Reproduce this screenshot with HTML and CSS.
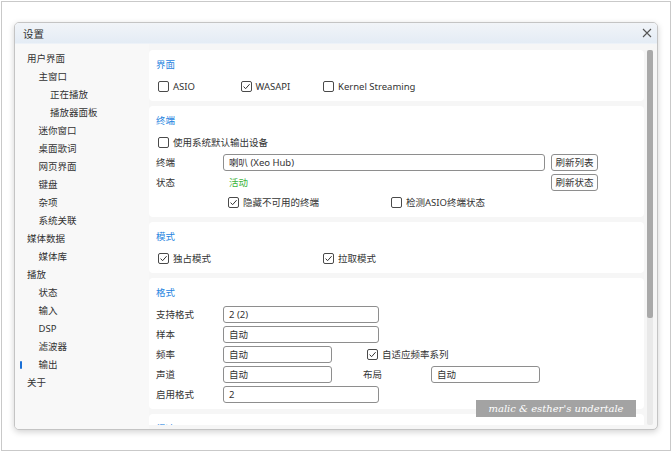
FILE: index.html
```html
<!DOCTYPE html>
<html lang="zh-CN">
<head>
<meta charset="utf-8">
<title>设置</title>
<link rel="stylesheet" href="styles.css">
</head>
<body>
<div class="frame">
  <div class="dialog">
    <div class="titlebar">
      <span class="title">设置</span>
      <svg class="close" width="10" height="10" viewBox="0 0 10 10"><path d="M1 1L9 9M9 1L1 9" stroke="#555" stroke-width="1.1" fill="none"/></svg>
    </div>
    <div class="body">
      <nav class="sidebar">
        <div class="item l0">用户界面</div>
        <div class="item l1">主窗口</div>
        <div class="item l2">正在播放</div>
        <div class="item l2">播放器面板</div>
        <div class="item l1">迷你窗口</div>
        <div class="item l1">桌面歌词</div>
        <div class="item l1">网页界面</div>
        <div class="item l1">键盘</div>
        <div class="item l1">杂项</div>
        <div class="item l1">系统关联</div>
        <div class="item l0">媒体数据</div>
        <div class="item l1">媒体库</div>
        <div class="item l0">播放</div>
        <div class="item l1">状态</div>
        <div class="item l1">输入</div>
        <div class="item l1">DSP</div>
        <div class="item l1">滤波器</div>
        <div class="item l1 selected">输出</div>
        <div class="item l0">关于</div>
      </nav>
      <div class="main">
        <div class="scroll">
          <section class="card">
            <h3 class="card-title">界面</h3>
            <div class="row opts opts3">
              <label class="check"><span class="box"></span>ASIO</label>
              <label class="check"><span class="box"><svg viewBox="0 0 11 11"><path d="M2.6 5.6L4.6 7.7L8.6 3.2"/></svg></span>WASAPI</label>
              <label class="check"><span class="box"></span>Kernel Streaming</label>
            </div>
          </section>

          <section class="card">
            <h3 class="card-title">终端</h3>
            <div class="row opts">
              <label class="check"><span class="box"></span>使用系统默认输出设备</label>
            </div>
            <div class="row">
              <span class="label">终端</span>
              <div class="field wide">喇叭 (Xeo Hub)</div>
              <div class="btn">刷新列表</div>
            </div>
            <div class="row">
              <span class="label">状态</span>
              <span class="status">活动</span>
              <div class="btn">刷新状态</div>
            </div>
            <div class="row opts opts-indent">
              <label class="check"><span class="box"><svg viewBox="0 0 11 11"><path d="M2.6 5.6L4.6 7.7L8.6 3.2"/></svg></span>隐藏不可用的终端</label>
              <label class="check"><span class="box"></span>检测ASIO终端状态</label>
            </div>
          </section>

          <section class="card">
            <h3 class="card-title">模式</h3>
            <div class="row opts opts2">
              <label class="check"><span class="box"><svg viewBox="0 0 11 11"><path d="M2.6 5.6L4.6 7.7L8.6 3.2"/></svg></span>独占模式</label>
              <label class="check"><span class="box"><svg viewBox="0 0 11 11"><path d="M2.6 5.6L4.6 7.7L8.6 3.2"/></svg></span>拉取模式</label>
            </div>
          </section>

          <section class="card">
            <h3 class="card-title">格式</h3>
            <div class="row">
              <span class="label">支持格式</span>
              <div class="field mid">2 (2)</div>
            </div>
            <div class="row">
              <span class="label">样本</span>
              <div class="field mid">自动</div>
            </div>
            <div class="row">
              <span class="label">频率</span>
              <div class="field half">自动</div>
              <label class="check after-half"><span class="box"><svg viewBox="0 0 11 11"><path d="M2.6 5.6L4.6 7.7L8.6 3.2"/></svg></span>自适应频率系列</label>
            </div>
            <div class="row">
              <span class="label">声道</span>
              <div class="field half">自动</div>
              <span class="sublabel">布局</span>
              <div class="field half">自动</div>
            </div>
            <div class="row">
              <span class="label">启用格式</span>
              <div class="field mid">2</div>
            </div>
          </section>

          <section class="card">
            <h3 class="card-title">缓冲</h3>
            <div class="row"></div>
          </section>
        </div>
        <div class="scrollbar"><div class="thumb"></div></div>
      </div>
    </div>
  </div>
  <div class="watermark">malic &amp; esther's undertale</div>
</div>
</body>
</html>
```

FILE: styles.css
```css
* { box-sizing: border-box; }

html, body {
  margin: 0;
  padding: 0;
  background: #ffffff;
}

body {
  font-family: "Noto Sans", "Noto Sans CJK SC", sans-serif;
  font-size: 9.5px;
  color: #333333;
}

.frame {
  position: relative;
  margin: 1px;
  width: 670px;
  height: 450px;
  border: 1px solid #c9c9c9;
  padding: 20px 0 0 12px;
}

.dialog {
  width: 644px;
  height: 408px;
  border: 1px solid #c4c4c4;
  border-radius: 5px;
  background: #f6f6f6;
  box-shadow: 0 2px 6px rgba(0, 0, 0, 0.18);
  overflow: hidden;
  display: flex;
  flex-direction: column;
}

.titlebar {
  height: 21px;
  flex: none;
  display: flex;
  align-items: center;
  justify-content: space-between;
  padding: 0 5px 0 8px;
  background: linear-gradient(to bottom, #f1f4f8, #e4ecf5);
  border-bottom: 1px solid #edf2f8;
}

.title {
  font-size: 10.5px;
  color: #333333;
}

.close { display: block; }

.body {
  flex: 1;
  display: flex;
  min-height: 0;
}

.sidebar {
  width: 134px;
  flex: none;
  padding: 6px 0 0 12px;
  background: #f8f8f8;
}

.item {
  position: relative;
  height: 18px;
  line-height: 18px;
  white-space: nowrap;
  color: #333333;
}

.l1 { padding-left: 11.5px; }
.l2 { padding-left: 23px; }

.selected::before {
  content: "";
  position: absolute;
  left: -7px;
  top: 5px;
  width: 2px;
  height: 8px;
  border-radius: 1px;
  background: #1a6fd6;
}

.main {
  flex: 1;
  display: flex;
  gap: 3px;
  padding: 6px 4px 4px 0;
  min-width: 0;
}

.scroll {
  width: 495px;
  flex: none;
  overflow: hidden;
  display: flex;
  flex-direction: column;
  gap: 5px;
}

.scrollbar {
  width: 6px;
  flex: none;
  background: #e9e9e9;
  border-radius: 2px;
}

.thumb {
  height: 268px;
  background: #a9a9a9;
  border-radius: 2px;
}

.card {
  flex: none;
  background: #ffffff;
  border-radius: 4px;
  padding: 8px 7px 5px 7px;
}

.card-title {
  margin: 0 0 4px 0;
  height: 14px;
  line-height: 14px;
  font-size: 9.5px;
  font-weight: normal;
  color: #1f84e0;
}

.row {
  height: 20px;
  display: flex;
  align-items: center;
  white-space: nowrap;
}

.opts { padding-left: 2px; display: grid; align-items: center; }
.opts3 { grid-template-columns: 82.5px 82.5px auto; }
.opts2 { grid-template-columns: 165px auto; }
.opts-indent { padding-left: 72px; grid-template-columns: 163px auto; }

.check {
  display: inline-flex;
  align-items: center;
  gap: 4px;
  color: #333333;
}

.box {
  width: 11px;
  height: 11px;
  flex: none;
  border: 1px solid #4a4a4a;
  border-radius: 2px;
  background: #ffffff;
  display: inline-block;
  position: relative;
}

.box svg {
  position: absolute;
  left: -1px;
  top: -1px;
  width: 11px;
  height: 11px;
  fill: none;
  stroke: #333333;
  stroke-width: 1;
}

.label {
  width: 67px;
  flex: none;
}

.field {
  height: 17px;
  line-height: 15px;
  border: 1px solid #8e8e8e;
  border-radius: 3px;
  background: #ffffff;
  padding-left: 5px;
  color: #333333;
  flex: none;
}

.wide { width: 322px; }
.mid { width: 156px; }
.half { width: 109px; }

.btn {
  width: 47px;
  height: 17px;
  line-height: 15px;
  margin-left: 6px;
  border: 1px solid #8e8e8e;
  border-radius: 3px;
  background: #fdfdfd;
  text-align: center;
  color: #333333;
  flex: none;
}

.status {
  width: 322px;
  padding-left: 6px;
  color: #3cb43c;
  flex: none;
}

.after-half { margin-left: 35px; }

.sublabel {
  margin-left: 31px;
  width: 68px;
  flex: none;
}

.watermark {
  position: absolute;
  left: 474px;
  top: 398px;
  width: 160px;
  height: 17px;
  background: #a3a3a3;
  color: #ffffff;
  font-family: "DejaVu Serif", serif;
  font-style: italic;
  font-size: 10px;
  line-height: 17px;
  text-align: center;
  white-space: nowrap;
}
```
